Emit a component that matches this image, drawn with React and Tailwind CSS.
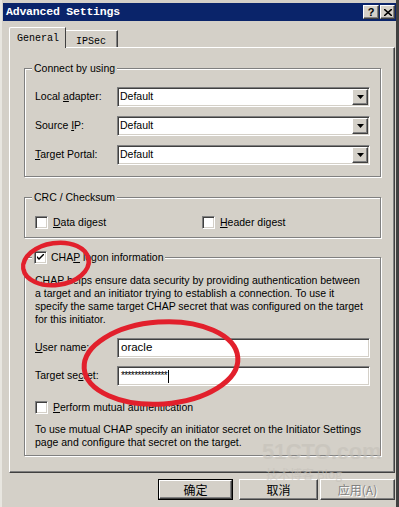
import React from "react";

const sunken =
  "border-t border-l border-t-[#808080] border-l-[#808080] border-b border-r border-b-white border-r-white shadow-[inset_1px_1px_0_#404040,inset_-1px_-1px_0_#d4d0c8]";
const raised =
  "border-t border-l border-t-white border-l-white border-b border-r border-b-[#404040] border-r-[#404040] shadow-[inset_-1px_-1px_0_#808080,inset_1px_1px_0_#d4d0c8]";

function U({ children }) {
  return <span className="underline underline-offset-[1px]">{children}</span>;
}

function Combo({ value }) {
  return (
    <div className={`w-[253px] h-[20px] bg-white flex items-center ${sunken}`}>
      <span className="flex-1 pl-[2px]">{value}</span>
      <div className={`w-[16px] h-[16px] mr-[1px] bg-[#d4d0c8] flex items-center justify-center ${raised}`}>
        <svg width="7" height="4" viewBox="0 0 7 4"><path d="M0 0h7L3.5 4z" fill="#000" /></svg>
      </div>
    </div>
  );
}

function Check({ checked }) {
  return (
    <div className={`w-[13px] h-[13px] bg-white flex items-center justify-center shrink-0 ${sunken}`}>
      {checked && (
        <svg width="7" height="7" viewBox="0 0 7 7">
          <path d="M0 2l2 2 5-5v2l-5 5-2-2z" fill="#000" />
        </svg>
      )}
    </div>
  );
}

function Group({ title, className, children }) {
  return (
    <div className={`relative border border-[#808080] shadow-[inset_1px_1px_0_#fff,1px_1px_0_#fff] ${className}`}>
      <div className="absolute -top-[8px] left-[7px] px-[2px] bg-[#d4d0c8] leading-[14px] flex items-center gap-[4px]">
        {title}
      </div>
      {children}
    </div>
  );
}

function Btn({ children, w, def, disabled }) {
  return (
    <div className={`h-[21px] flex items-center justify-center ${w} ${def ? "border border-black" : ""}`}>
      <div
        className={`w-full h-full flex items-center justify-center ${raised} ${
          disabled ? "text-[#808080] [text-shadow:1px_1px_0_#fff]" : ""
        }`}
      >
        {children}
      </div>
    </div>
  );
}

export default function App() {
  return (
    <div
      className="relative w-[399px] h-[507px] bg-[#d4d0c8] overflow-hidden text-[10.5px] text-black border-l-2 border-l-[#e8e6e0] border-r-3 border-r-[#404040]"
      style={{ fontFamily: '"Liberation Sans", Arial, sans-serif' }}
    >
      {/* title bar */}
      <div className="mt-[3px] ml-[1px] h-[18px] bg-[#0a246a] flex items-center justify-between pl-[3px] pr-[1px]">
        <span
          className="text-white font-bold text-[11.5px] tracking-[-0.2px]"
          style={{ fontFamily: '"Liberation Mono", "DejaVu Sans Mono", monospace' }}
        >
          Advanced Settings
        </span>
        <div className="flex">
          <div className={`w-[16px] h-[14px] bg-[#d4d0c8] flex items-center justify-center font-bold text-[11px] ${raised}`}>?</div>
          <div className={`w-[15px] h-[14px] ml-[1px] bg-[#d4d0c8] flex items-center justify-center ${raised}`}>
            <svg width="8" height="7" viewBox="0 0 8 7"><path d="M0 0l8 7M8 0L0 7" stroke="#000" strokeWidth="1.6" /></svg>
          </div>
        </div>
      </div>

      {/* tabs */}
      <div
        className="ml-[7px] w-[386px] mt-[7px] h-[19px] flex items-end"
        style={{ fontFamily: '"Liberation Mono", "DejaVu Sans Mono", monospace' }}
      >
        <div className="relative z-10 -mb-px w-[57px] h-[21px] bg-[#d4d0c8] border-t border-l border-t-white border-l-white border-r border-r-[#404040] rounded-tl-[2px] pl-[7px] pt-[3px] text-[10px]">
          General
        </div>
        <div className="w-[52px] h-[17px] bg-[#d4d0c8] border-t border-t-white border-r border-r-[#404040] shadow-[inset_-1px_0_0_#808080] pl-[10px] pt-[3px] text-[10px]">
          IPSec
        </div>
      </div>

      {/* panel */}
      <div className="ml-[7px] w-[386px] h-[426px] border-t border-l border-t-white border-l-white border-r border-b border-r-[#404040] border-b-[#404040] shadow-[inset_-1px_-1px_0_#808080] pl-[14px] pt-[20px]">
        <Group title={<span>Connect by using</span>} className="w-[357px] h-[109px] pt-[18px] pl-[10px]">
          <div className="flex flex-col gap-[9px]">
            <div className="flex items-center">
              <span className="w-[82px]">Local <U>a</U>dapter:</span>
              <Combo value="Default" />
            </div>
            <div className="flex items-center">
              <span className="w-[82px]">Source <U>I</U>P:</span>
              <Combo value="Default" />
            </div>
            <div className="flex items-center">
              <span className="w-[82px]"><U>T</U>arget Portal:</span>
              <Combo value="Default" />
            </div>
          </div>
        </Group>

        <Group title={<span>CRC / Checksum</span>} className="mt-[20px] w-[357px] h-[41px] pt-[17px] pl-[10px]">
          <div className="flex items-center">
            <div className="w-[167px] flex items-center gap-[5px]">
              <Check />
              <span><U>D</U>ata digest</span>
            </div>
            <div className="flex items-center gap-[5px]">
              <Check />
              <span><U>H</U>eader digest</span>
            </div>
          </div>
        </Group>

        <Group
          title={
            <>
              <Check checked />
              <span>CHA<U>P</U> logon information</span>
            </>
          }
          className="mt-[19px] w-[357px] h-[199px] pt-[16px] pl-[10px]"
        >
          <p className="leading-[13px] whitespace-nowrap">
            CHAP helps ensure data security by providing authentication between
            <br />a target and an initiator trying to establish a connection. To use it
            <br />specify the same target CHAP secret that was configured on the target
            <br />for this initiator.
          </p>
          <div className="mt-[12px] flex flex-col gap-[8px]">
            <div className="flex items-center">
              <span className="w-[82px]"><U>U</U>ser name:</span>
              <div className={`w-[253px] h-[20px] bg-white flex items-center pl-[3px] text-[11.5px] ${sunken}`}>oracle</div>
            </div>
            <div className="flex items-center">
              <span className="w-[82px]">Target se<U>c</U>ret:</span>
              <div className={`w-[253px] h-[20px] bg-white flex items-center pl-[3px] ${sunken}`}>
                <span className="text-[10px] tracking-[-0.6px] leading-none">**************</span>
                <span className="w-px h-[13px] bg-black ml-[1px]" />
              </div>
            </div>
          </div>
          <div className="mt-[14px] flex items-center gap-[5px]">
            <Check />
            <span><U>P</U>erform mutual authentication</span>
          </div>
          <p className="mt-[7px] leading-[13px] whitespace-nowrap">
            To use mutual CHAP specify an initiator secret on the Initiator Settings
            <br />page and configure that secret on the target.
          </p>
        </Group>
      </div>

      {/* buttons */}
      <div className="mt-[6px] flex text-[12px]" style={{ fontFamily: '"Noto Sans CJK SC", "Liberation Sans", sans-serif' }}>
        <div className="ml-[156px]">
          <Btn w="w-[75px]" def>确定</Btn>
        </div>
        <div className="ml-[6px]">
          <Btn w="w-[79px]">取消</Btn>
        </div>
        <div className="ml-[2px]">
          <Btn w="w-[75px]" disabled>应用(A)</Btn>
        </div>
      </div>

      {/* watermark */}
      <div className="absolute left-[260px] top-[438px] pointer-events-none select-none text-[#c4c0b9] opacity-60">
        <div className="font-bold text-[22px] leading-[28px] tracking-[-0.3px]" style={{ fontFamily: '"Liberation Sans", Arial, sans-serif' }}>
          51CTO.com
        </div>
        <div className="text-[12px] leading-[15px] ml-[4px]" style={{ fontFamily: '"Noto Sans CJK SC", sans-serif' }}>
          技术博客 Blog
        </div>
      </div>

      {/* red annotation circles */}
      <svg className="absolute left-0 top-0 pointer-events-none" width="399" height="507" viewBox="0 0 399 507">
        <ellipse cx="54" cy="264" rx="33" ry="21" fill="none" stroke="#e2202c" strokeWidth="4.5" transform="rotate(-8 54 264)" />
        <ellipse cx="159" cy="363" rx="77" ry="41" fill="none" stroke="#e2202c" strokeWidth="5" transform="rotate(-4 159 363)" />
      </svg>
    </div>
  );
}
